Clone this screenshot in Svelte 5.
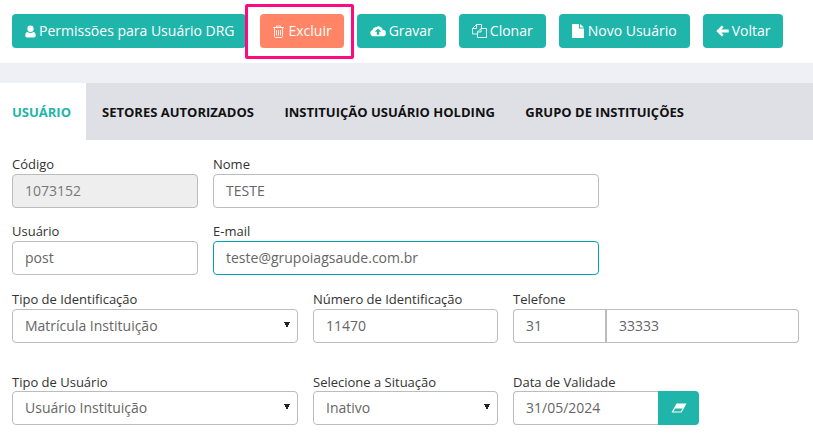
<script>
  const tabs = ['Usuário', 'Setores Autorizados', 'Instituição Usuário Holding', 'Grupo de Instituições'];
</script>

<div class="page">
  <div class="toolbar">
    <button class="btn first">
      <svg width="11" height="13" viewBox="0 0 12 14"><path d="M6 0.500a3.400 3.400 0 0 1 3.400 3.600A3.400 3.400 0 0 1 6 7.600a3.400 3.400 0 0 1-3.400-3.500A3.400 3.400 0 0 1 6 0.500zM3 7.600c.8.600 1.800 1 3 1s2.200-.4 3-1c1.800.2 2.700 1.700 2.700 4 0 1.200-.8 1.900-1.900 1.900H2.200C1.100 13.500.3 12.800.3 11.600c0-2.300.9-3.800 2.700-4z" fill="#fff"/></svg>
      Permissões para Usuário DRG
    </button>
    <div class="highlight">
      <button class="btn danger">
        <svg class="trash" width="11" height="13" viewBox="0 0 11 13" fill="none" stroke="#fff" stroke-opacity=".85"><path d="M0 2.500h11M3.500 2.500V1h4v1.500M1.500 2.500v9.300l.7.700h6.600l.7-.7V2.500M3.500 5v5.500M5.500 5v5.500M7.500 5v5.500"/></svg>
        Excluir
      </button>
    </div>
    <button class="btn">
      <svg width="16" height="12" viewBox="0 0 16 12"><path d="M12.700 4.800A2.900 2.900 0 0 1 12.500 11.300H3.500A3.300 3.300 0 0 1 2.500 4.900 3.200 3.200 0 0 1 6.200 2.300 4 4 0 0 1 12.700 4.800zM8 3.500 4.800 6.800h2v3h2.400v-3h2z" fill="#fff" fill-rule="evenodd"/></svg>
      Gravar
    </button>
    <button class="btn">
      <svg width="15" height="14" viewBox="0 0 15 14" fill="none" stroke="#fff" stroke-opacity=".9"><path d="M9.500 4.500V.5h-5l-4 4V10h5M4.500.5v4h-4"/><path d="M9 4.500h5.500v9h-9V8zM9 4.500V8H5.500"/></svg>
      Clonar
    </button>
    <button class="btn">
      <svg class="file" width="12" height="14" viewBox="0 0 12 14"><path d="M0 0h7v4.500h5V14H0zM8 0l4 3.500H8z" fill="#fff"/></svg>
      Novo Usuário
    </button>
    <button class="btn">
      <svg width="13" height="12" viewBox="0 0 13 12"><path d="M.3 6 5.800.4 7.600 2.200 5.300 4.500h7.400v3H5.300l2.300 2.300-1.800 1.800z" fill="#fff"/></svg>
      Voltar
    </button>
  </div>

  <div class="band"></div>

  <div class="tabs">
    {#each tabs as tab, i}
      <div class="tab" class:active={i === 0}>{tab}</div>
    {/each}
  </div>

  <form class="form">
    <div class="row">
      <label class="field w186">Código<input value="1073152" disabled /></label>
      <label class="field w386">Nome<input value="TESTE" /></label>
    </div>
    <div class="row">
      <label class="field w186">Usuário<input value="post" /></label>
      <label class="field w386">E-mail<input class="focused" value="teste@grupoiagsaude.com.br" /></label>
    </div>
    <div class="row">
      <label class="field w286">Tipo de Identificação
        <select><option>Matrícula Instituição</option></select>
      </label>
      <label class="field w185">Número de Identificação<input value="11470" /></label>
      <div class="field w286">Telefone
        <div class="phone">
          <input class="ddd" value="31" aria-label="DDD" />
          <input class="number" value="33333" aria-label="Número" />
        </div>
      </div>
    </div>
    <div class="row last">
      <label class="field w286">Tipo de Usuário
        <select><option>Usuário Instituição</option></select>
      </label>
      <label class="field w185">Selecione a Situação
        <select><option>Inativo</option></select>
      </label>
      <div class="field w186">Data de Validade
        <div class="date">
          <input value="31/05/2024" aria-label="Data de Validade" />
          <button type="button" class="clear" aria-label="Limpar">
            <svg width="16" height="10" viewBox="0 0 16 10"><path d="M5.500.5H15.500L10.500 9.500H.5zM4.300 5.500 2.300 8.400H9.800L11.500 5.500z" fill="#fff" fill-rule="evenodd"/></svg>
          </button>
        </div>
      </div>
    </div>
  </form>
</div>

<style>
  :global(body) {
    margin: 0;
    background: #fff;
  }

  .page {
    width: 813px;
    height: 440px;
    overflow: hidden;
    font-family: "Open Sans", sans-serif;
    font-size: 13px;
    color: #333;
  }

  .toolbar {
    display: flex;
    align-items: center;
    gap: 13px;
    height: 63px;
    padding: 0 12px 1px;
    box-sizing: border-box;
  }

  .btn {
    display: flex;
    align-items: center;
    gap: 3px;
    height: 34px;
    padding: 0 13px 2px 12px;
    border: 0;
    border-radius: 4px;
    background: #20b5ab;
    color: #fff;
    font: 14px "Open Sans", sans-serif;
    white-space: nowrap;
  }

  .btn svg {
    flex: none;
    margin: 2px 0 0 1px;
  }

  .btn .trash {
    margin-right: 1px;
  }

  .btn .file {
    margin-right: 1px;
  }

  .first {
    padding-right: 12px;
  }

  .danger {
    background: #ff8566;
    padding-right: 12px;
  }

  .highlight {
    position: relative;
    display: flex;
    margin-left: 1px;
  }

  .highlight::before {
    content: '';
    position: absolute;
    inset: -10px -10px -11px -15px;
    border: 3px solid #fd0a80;
    border-radius: 2px;
  }

  .band {
    height: 20px;
    background: #eff0f5;
  }

  .tabs {
    display: flex;
    height: 57px;
    background: #dfe0e5;
  }

  .tab {
    display: flex;
    align-items: center;
    padding: 0 15.250px;
    font-size: 13px;
    font-weight: 700;
    text-transform: uppercase;
    color: #111;
    white-space: nowrap;
  }

  .tab:first-child {
    padding: 0 15px 0 12px;
  }

  .tab:nth-child(2) {
    padding-left: 16px;
  }

  .tab.active {
    background: #fff;
    color: #20b5ab;
  }

  .form {
    display: flex;
    flex-direction: column;
    padding: 15px 14px 0 12px;
  }

  .row {
    display: flex;
    gap: 15px;
    margin-bottom: 15px;
  }

  .row:first-child {
    margin-bottom: 14px;
  }

  .row:nth-child(3) {
    margin-bottom: 30px;
  }

  .row.last .field {
    line-height: 18px;
  }

  .field {
    display: flex;
    flex-direction: column;
    line-height: 19px;
    color: #333;
  }

  .w186 { width: 186px; }
  .w386 { width: 386px; }
  .w286 { width: 286px; }
  .w185 { width: 185px; }

  input,
  select {
    box-sizing: border-box;
    width: 100%;
    height: 34px;
    padding: 0 12px 2px;
    border: 1px solid #bcbcbc;
    border-radius: 4px;
    background: #fff;
    color: #666;
    font: 14px "Open Sans", sans-serif;
    outline: none;
  }

  select {
    appearance: none;
    background-image: linear-gradient(to top right, transparent 50%, #222 50%), linear-gradient(to top left, transparent 50%, #222 50%);
    background-size: 3px 6px, 3px 6px;
    background-position: calc(100% - 10px) 12px, calc(100% - 7px) 12px;
    background-repeat: no-repeat;
  }

  input:disabled {
    background: #eee;
    color: #777;
  }

  .focused {
    border-color: #00a3ad;
  }

  .phone,
  .date {
    display: flex;
  }

  .ddd {
    width: 92px;
    border-right: 0;
    border-radius: 4px 0 0 4px;
  }

  .number {
    flex: 1;
    min-width: 0;
    border-left-width: 2px;
    border-radius: 0 4px 4px 0;
  }

  .date input {
    flex: 1;
    min-width: 0;
    border-right: 0;
    border-radius: 4px 0 0 4px;
  }

  .clear {
    display: flex;
    align-items: center;
    justify-content: center;
    width: 41px;
    flex: none;
    height: 34px;
    padding: 0;
    border: 0;
    border-radius: 0 4px 4px 0;
    background: #20b5ab;
  }
</style>
